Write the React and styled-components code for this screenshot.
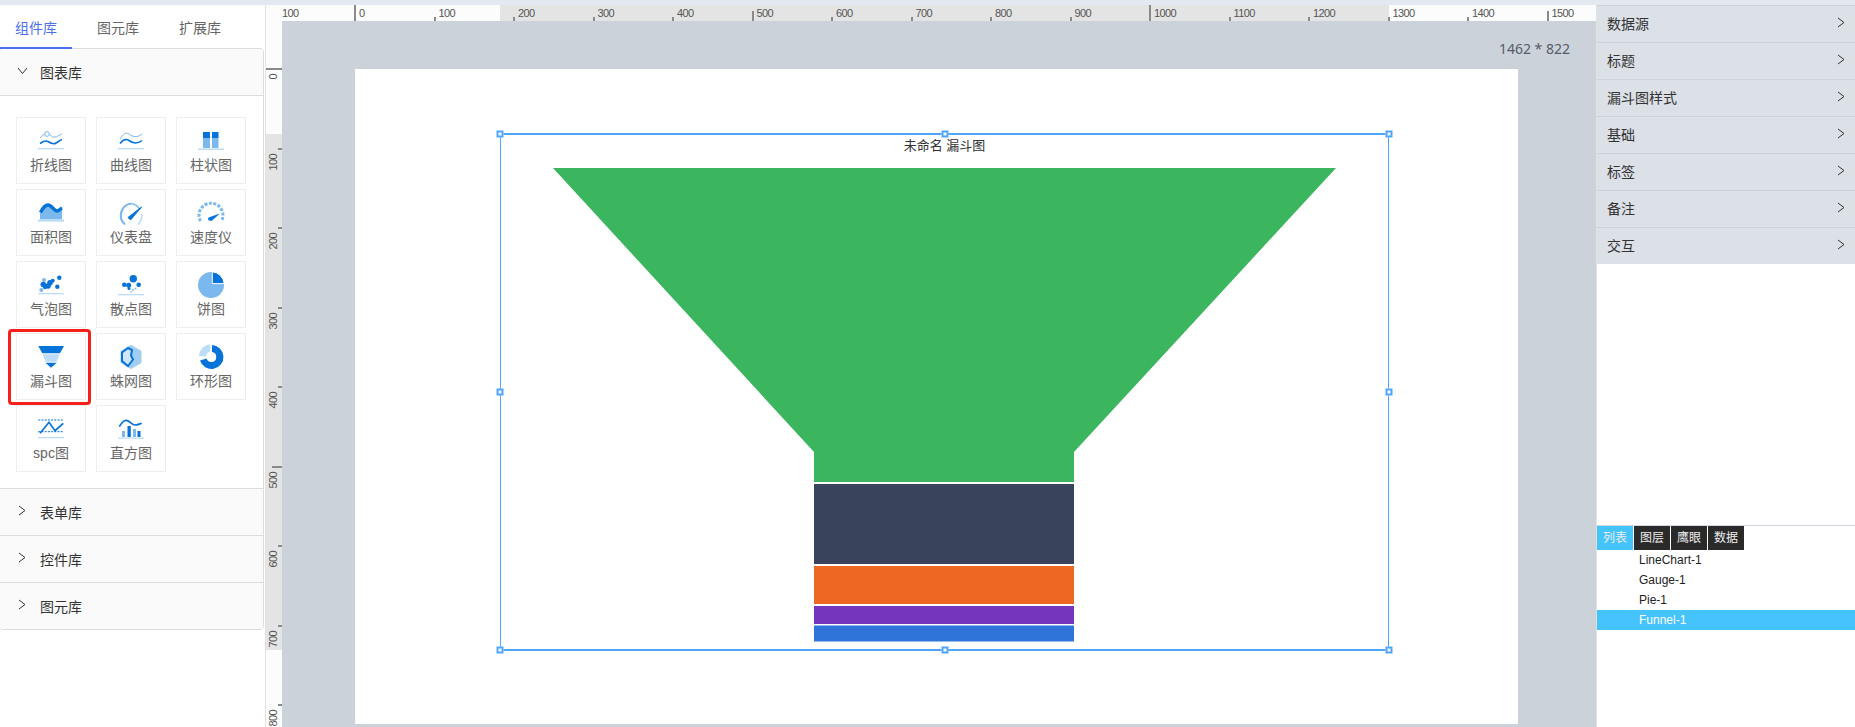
import styled, { createGlobalStyle } from "styled-components";

const DARK = "#0573d9";
const MID = "#7ab8ee";
const PALE = "#bcdcf7";

const GlobalStyle = createGlobalStyle`
  html, body {
    margin: 0;
    padding: 0;
    height: 100%;
    overflow: hidden;
    background: #fff;
    font-family: "Liberation Sans", "Noto Sans CJK SC", sans-serif;
  }
  * { box-sizing: border-box; }
`;

function ChevronRight() {
  return (
    <svg width="8" height="11" viewBox="0 0 8 11" fill="none" stroke="#333" strokeWidth="1">
      <path d="M1 1l6 4.500L1 10" />
    </svg>
  );
}

function ChevronDown() {
  return (
    <svg width="11" height="8" viewBox="0 0 11 8" fill="none" stroke="#333" strokeWidth="1">
      <path d="M1 1l4.500 5.500L10 1" />
    </svg>
  );
}

const Base = ({ y = 21 }) => <rect x="3" y={y} width="26" height="1.3" fill={PALE} />;

const ICONS = {
  line: (
    <>
      <path d="M5 11c3-3 4-4 7-4 4 0 5 4 8 3 2 0 4-2 7-3" fill="none" stroke={MID} />
      <circle cx="12" cy="7" r="2.4" fill="#fff" stroke={MID} />
      <path d="M5 16.500c3-2 5-3.500 8-2 3 2 6 3 8 1.500 2-1 4-3 6-3.500" fill="none" stroke={DARK} strokeWidth="1.6" />
      <Base />
    </>
  ),
  curve: (
    <>
      <path d="M5 12c3-5 6-7 9-5 4 3 8 4 13 0" fill="none" stroke={MID} />
      <path d="M5 16.500c3-4 6-5 9-3 4 3 8 4 13 0" fill="none" stroke={DARK} strokeWidth="1.6" />
      <Base />
    </>
  ),
  bar: (
    <>
      <rect x="8" y="12" width="7" height="9" fill={MID} />
      <rect x="17" y="12" width="6.5" height="9" fill={MID} />
      <rect x="8" y="5" width="7" height="6.5" fill={DARK} />
      <rect x="17" y="5" width="6.5" height="6.5" fill={DARK} />
      <rect x="3" y="21.5" width="26" height="1.5" fill={PALE} />
    </>
  ),
  area: (
    <>
      <path d="M5 20.500V14C8 8 10 5 13 5c4 0 6 6 9 6 2 0 3-2 5-3v12.500z" fill={MID} />
      <path d="M5.500 13.500C8 8.500 10 6 13 6c4 0 6 6 9 6 2 0 3-2 5-3" fill="none" stroke={DARK} strokeWidth="3.4" />
      <rect x="3" y="20.5" width="26" height="2.2" fill={PALE} />
    </>
  ),
  gauge: (
    <>
      <path d="M10 25.500A12 12 0 0 1 16.500 4.500" fill="none" stroke={MID} strokeWidth="2.2" />
      <path d="M16.500 4.500A12 12 0 0 1 25 11" fill="none" stroke={MID} strokeWidth="1.4" />
      <path d="M26.500 15A12 12 0 0 1 23 25.500" fill="none" stroke={PALE} strokeWidth="1.5" />
      <path d="M13 18.500l2.500 2.500L26.500 8z" fill={DARK} stroke={DARK} strokeLinejoin="round" />
    </>
  ),
  speed: (
    <>
      <path d="M5.500 22A12 12 0 1 1 26.500 22" fill="none" stroke={MID} strokeWidth="3" strokeDasharray="3 1.500" />
      <path d="M13 21l0.500-2.500L25 14.500l-8.500 7.500z" fill={DARK} />
    </>
  ),
  bubble: (
    <>
      <circle cx="24.3" cy="6.7" r="2.2" fill={DARK} />
      <circle cx="9" cy="9" r="2" fill={MID} />
      <circle cx="15" cy="11.7" r="2.8" fill={DARK} />
      <circle cx="17.7" cy="9.7" r="2" fill={DARK} />
      <circle cx="8.3" cy="13.5" r="2.8" fill={DARK} />
      <circle cx="13" cy="15" r="2.8" fill={DARK} />
      <circle cx="22.3" cy="15.7" r="2.2" fill={DARK} />
      <circle cx="10" cy="16.3" r="2" fill={DARK} />
      <circle cx="6.3" cy="19" r="2" fill={MID} />
      <Base y={22} />
    </>
  ),
  scatter: (
    <>
      <circle cx="18.3" cy="7.7" r="3.7" fill={DARK} />
      <circle cx="9.3" cy="13.7" r="2.3" fill={DARK} />
      <circle cx="13.7" cy="14.3" r="2.5" fill={DARK} />
      <circle cx="23.7" cy="13.7" r="2.3" fill={DARK} />
      <circle cx="14" cy="17.5" r="1.5" fill={DARK} />
      <circle cx="20.5" cy="17.5" r="1" fill={MID} />
      <circle cx="18" cy="19" r="1" fill={MID} />
      <circle cx="16" cy="21" r="0.8" fill={MID} />
      <Base y={23} />
    </>
  ),
  pie: (
    <>
      <circle cx="16" cy="14" r="13" fill={MID} />
      <path d="M17.300 12.600V0.800A13 13 0 0 1 29.200 12.600z" fill={DARK} stroke="#fff" strokeWidth="1" />
    </>
  ),
  funnel: (
    <>
      <path d="M3.300 3H29l-4 7.300H7.300z" fill={DARK} />
      <path d="M7.600 11.300h17.100l-3 7.400H10.500z" fill={PALE} />
      <path d="M10.500 19.700h11.200L16 24.700z" fill={DARK} />
    </>
  ),
  radar: (
    <>
      <path d="M16 1.700l10.500 6.300v12l-10.500 6-10.500-6V8z" fill={MID} opacity="0.7" />
      <path d="M13 5L7 9.500v8.500l6 5 5-6.500-2-4 1-5.500z" fill="#fff" opacity="0.5" />
      <path d="M13 5L7 9.500v8.500l6 5 5-6.500-2-4 1-5.500z" fill="none" stroke={DARK} strokeWidth="2" />
    </>
  ),
  donut: (
    <>
      <path d="M15.300 1.500A12 12 0 0 0 4 13.300h7.300A5 5 0 0 1 15.300 8.500z" fill={PALE} />
      <path d="M17 2A12 12 0 1 1 5 17.500l6.500-2A5 5 0 1 0 17 9z" fill={DARK} />
    </>
  ),
  spc: (
    <>
      <path d="M3.300 5H28M3.300 16.700H28" stroke={DARK} strokeDasharray="2 1.200" />
      <path d="M5 18.300l9-11 6 8.400 8.300-7.400" fill="none" stroke={DARK} strokeWidth="1.7" />
      <Base y={22} />
    </>
  ),
  histogram: (
    <>
      <rect x="7" y="16" width="3" height="6" fill={MID} />
      <rect x="12.5" y="11" width="3.3" height="11" fill={DARK} />
      <rect x="18" y="14" width="3" height="8" fill={MID} />
      <rect x="22.5" y="16" width="3" height="6" fill={DARK} />
      <path d="M4.300 11.700C7 7 9 5 11.500 5.300 15 6 17 10 20 10c2.500 0 4.500-1 6.700-1.700" fill="none" stroke={DARK} strokeWidth="1.7" />
      <Base y={22.5} />
    </>
  ),
};

const charts = [
  { name: "折线图", icon: "line" },
  { name: "曲线图", icon: "curve" },
  { name: "柱状图", icon: "bar" },
  { name: "面积图", icon: "area" },
  { name: "仪表盘", icon: "gauge" },
  { name: "速度仪", icon: "speed" },
  { name: "气泡图", icon: "bubble" },
  { name: "散点图", icon: "scatter" },
  { name: "饼图", icon: "pie" },
  { name: "漏斗图", icon: "funnel", marked: true },
  { name: "蛛网图", icon: "radar" },
  { name: "环形图", icon: "donut" },
  { name: "spc图", icon: "spc" },
  { name: "直方图", icon: "histogram" },
];

const hMarks = Array.from({ length: 16 }, (_, i) => i * 100);
const vMarks = Array.from({ length: 9 }, (_, i) => i * 100);
const handles = [
  [0, 0], [50, 0], [100, 0],
  [0, 50], [100, 50],
  [0, 100], [50, 100], [100, 100],
];
const SCALE = 0.795;

function tickSize(mark) {
  if (mark % 1000 === 0) return 16;
  if (mark % 500 === 0) return 10;
  return 4;
}

function App() {
  return (
    <Page>
      <GlobalStyle />

      <LeftPanel>
        <Tabs>
          <Tab $active>组件库</Tab>
          <Tab>图元库</Tab>
          <Tab>扩展库</Tab>
        </Tabs>
        <Collapse>
          <CollapseHead>
            <Arrow><ChevronDown /></Arrow>
            图表库
          </CollapseHead>
          <CardGrid>
            {charts.map((chart) => (
              <Card key={chart.name} $marked={chart.marked}>
                <svg width="32" height="28" viewBox="0 0 32 28">
                  {ICONS[chart.icon]}
                </svg>
                <span>{chart.name}</span>
              </Card>
            ))}
          </CardGrid>
          {["表单库", "控件库", "图元库"].map((name) => (
            <CollapseHead key={name}>
              <Arrow><ChevronRight /></Arrow>
              {name}
            </CollapseHead>
          ))}
        </Collapse>
      </LeftPanel>

      <Center>
        <HRuler>
          <HBand />
          {hMarks.map((mark) => (
            <HMark key={mark} style={{ left: 89 + mark * SCALE }}>
              <HTick $size={tickSize(mark)} />
              <HLabel>{mark}</HLabel>
            </HMark>
          ))}
          <HLabelBack>100</HLabelBack>
        </HRuler>
        <Workspace>
          <VRuler>
            <VBand />
            {vMarks.map((mark) => (
              <VMark key={mark} style={{ top: 48 + mark * SCALE }}>
                <VTick $size={tickSize(mark)} />
                <VLabel>{mark}</VLabel>
              </VMark>
            ))}
          </VRuler>
          <Canvas>
            <SizeText>1462 * 822</SizeText>
            <Paper>
              <Selection>
                <ChartTitle>未命名 漏斗图</ChartTitle>
                <Funnel viewBox="0 0 889 516">
                  <polygon points="53,34 836,34 574,318 574,348 314,348 314,318" fill="#3cb55f" />
                  <rect x="314" y="350" width="260" height="80" fill="#39435b" />
                  <rect x="314" y="432" width="260" height="38" fill="#ee6723" />
                  <rect x="314" y="472" width="260" height="18" fill="#7536bd" />
                  <rect x="314" y="491.5" width="260" height="16" fill="#2f74d8" />
                </Funnel>
                {handles.map(([x, y]) => (
                  <Handle key={`${x}-${y}`} $x={x} $y={y} />
                ))}
              </Selection>
            </Paper>
          </Canvas>
        </Workspace>
      </Center>

      <RightPanel>
        <Props>
          {["数据源", "标题", "漏斗图样式", "基础", "标签", "备注", "交互"].map((name) => (
            <PropRow key={name}>
              {name}
              <ChevronRight />
            </PropRow>
          ))}
        </Props>
        <LayerTabs>
          <LayerTab $active>列表</LayerTab>
          <LayerTab>图层</LayerTab>
          <LayerTab>鹰眼</LayerTab>
          <LayerTab>数据</LayerTab>
        </LayerTabs>
        <LayerRow>LineChart-1</LayerRow>
        <LayerRow>Gauge-1</LayerRow>
        <LayerRow>Pie-1</LayerRow>
        <LayerRow $active>Funnel-1</LayerRow>
      </RightPanel>
    </Page>
  );
}

export default App;

const Page = styled.div`
  display: flex;
  height: 727px;
  padding-top: 5px;
  background: #e4e9f1;
  overflow: hidden;
`;

const LeftPanel = styled.div`
  width: 266px;
  flex: none;
  background: #fff;
  border-right: 1px solid #e2e2e2;
`;

const Tabs = styled.div`
  display: flex;
  gap: 10px;
  height: 43px;
`;

const Tab = styled.div`
  width: 72px;
  padding: 0 15px;
  font-size: 14px;
  line-height: 46px;
  height: 44px;
  position: relative;
  z-index: 1;
  color: ${(p) => (p.$active ? "#4c6fef" : "#666")};
  border-bottom: 2px solid ${(p) => (p.$active ? "#4c6fef" : "transparent")};
`;

const Collapse = styled.div`
  width: 265px;
  margin-left: -1px;
  border: 1px solid #dcdcdc;
  border-radius: 4px;
  overflow: hidden;
`;

const CollapseHead = styled.div`
  display: flex;
  align-items: center;
  height: 47px;
  background: #fafafa;
  font-size: 14px;
  color: #333;
  border-bottom: 1px solid #dcdcdc;

  &:last-child {
    border-bottom: none;
    height: 46px;
  }
`;

const Arrow = styled.span`
  display: flex;
  justify-content: center;
  width: 26px;
  margin-left: 9px;
  margin-right: 5px;
  margin-top: -3px;
`;

const CardGrid = styled.div`
  display: grid;
  grid-template-columns: repeat(3, 70px);
  grid-auto-rows: 67px;
  gap: 5px 10px;
  padding: 21px 0 16px 16px;
  background: #fff;
  border-bottom: 1px solid #dcdcdc;
`;

const Card = styled.div`
  position: relative;
  display: flex;
  flex-direction: column;
  align-items: center;
  padding-top: 9px;
  border: 1px solid #eee;
  background: #fff;

  span {
    margin-top: 1px;
    font-size: 14px;
    line-height: 18px;
    color: #666;
  }

  ${(p) =>
    p.$marked &&
    `
    &::after {
      content: "";
      position: absolute;
      left: -9px;
      right: -6px;
      top: -5px;
      bottom: -6px;
      border: 3px solid #f5201a;
      border-radius: 4px;
    }
  `}
`;

const Center = styled.div`
  flex: 1;
  min-width: 0;
  display: flex;
  flex-direction: column;
`;

const HRuler = styled.div`
  position: relative;
  height: 16px;
  flex: none;
  background: #fcfcfc;
  overflow: hidden;
`;

const HBand = styled.div`
  position: absolute;
  left: 234px;
  width: 889px;
  top: 0;
  bottom: 0;
  background: #e4e4e4;
`;

const HMark = styled.div`
  position: absolute;
  top: 0;
  bottom: 0;
`;

const HTick = styled.div`
  position: absolute;
  left: -1px;
  bottom: 0;
  width: 2px;
  height: ${(p) => p.$size}px;
  background: #8a8a8a;
`;

const HLabel = styled.div`
  position: absolute;
  left: 4px;
  top: 2px;
  font-size: 11px;
  letter-spacing: -0.6px;
  line-height: 12px;
  color: #555;
`;

const HLabelBack = styled(HLabel)`
  left: 16px;
`;

const Workspace = styled.div`
  flex: 1;
  display: flex;
  min-height: 0;
`;

const VRuler = styled.div`
  position: relative;
  width: 16px;
  flex: none;
  background: #fcfcfc;
  overflow: hidden;
`;

const VBand = styled.div`
  position: absolute;
  left: 0;
  right: 0;
  top: 113px;
  height: 516px;
  background: #e4e4e4;
`;

const VMark = styled.div`
  position: absolute;
  left: 0;
  right: 0;
`;

const VTick = styled.div`
  position: absolute;
  right: 0;
  top: -1px;
  height: 2px;
  width: ${(p) => p.$size}px;
  background: #8a8a8a;
`;

const VLabel = styled.div`
  position: absolute;
  left: 1px;
  top: 5px;
  writing-mode: vertical-rl;
  transform: rotate(180deg);
  font-size: 11px;
  letter-spacing: -0.6px;
  line-height: 12px;
  color: #555;
`;

const Canvas = styled.div`
  position: relative;
  flex: 1;
  min-width: 0;
  padding: 48px 0 0 73px;
  background: #ccd2d9;
  overflow: hidden;
`;

const SizeText = styled.div`
  position: absolute;
  right: 26px;
  top: 18px;
  font-family: "Noto Sans", sans-serif;
  font-size: 14px;
  line-height: 20px;
  color: #555c66;
`;

const Paper = styled.div`
  position: relative;
  width: 1163px;
  height: 655px;
  background: #fff;
`;

const Selection = styled.div`
  position: absolute;
  left: 145px;
  top: 65px;
  width: 889px;
  height: 516px;
  box-shadow: inset 0 0 0 1px #4ea5fb, 0 1px 0 #4ea5fb, 0 -1px 0 #4ea5fb;
`;

const ChartTitle = styled.div`
  padding-top: 3px;
  text-align: center;
  font-size: 13px;
  line-height: 18px;
  color: #333;
`;

const Funnel = styled.svg`
  position: absolute;
  left: 0;
  top: 0;
  width: 889px;
  height: 516px;
`;

const Handle = styled.div`
  position: absolute;
  left: ${(p) => p.$x}%;
  top: ${(p) => p.$y}%;
  width: 7px;
  height: 7px;
  transform: translate(-50%, -50%);
  background: #fff;
  border: 2px solid #4ea5fb;
`;

const RightPanel = styled.div`
  width: 259px;
  flex: none;
  background: #fff;
  border-left: 1px solid #e2e2e2;
  display: flex;
  flex-direction: column;
`;

const Props = styled.div`
  flex: none;
  height: 521px;
  border-bottom: 1px solid #d5d5e0;
`;

const PropRow = styled.div`
  display: flex;
  align-items: center;
  justify-content: space-between;
  height: 37px;
  padding: 0 10px 2px;
  background: #dce0e7;
  border-top: 1px solid #cdd1d8;
  font-size: 14px;
  color: #333;

  svg {
    margin-top: -2px;
  }
`;

const LayerTabs = styled.div`
  display: flex;
  gap: 1px;
  height: 24px;
`;

const LayerTab = styled.div`
  width: 36px;
  text-align: center;
  font-size: 12px;
  line-height: 24px;
  color: #eee;
  background: ${(p) => (p.$active ? "#45c3fb" : "#2a2a2a")};
`;

const LayerRow = styled.div`
  height: 20px;
  padding-left: 42px;
  font-size: 12px;
  line-height: 20px;
  color: ${(p) => (p.$active ? "#fff" : "#222")};
  background: ${(p) => (p.$active ? "#45c3fb" : "transparent")};
`;
